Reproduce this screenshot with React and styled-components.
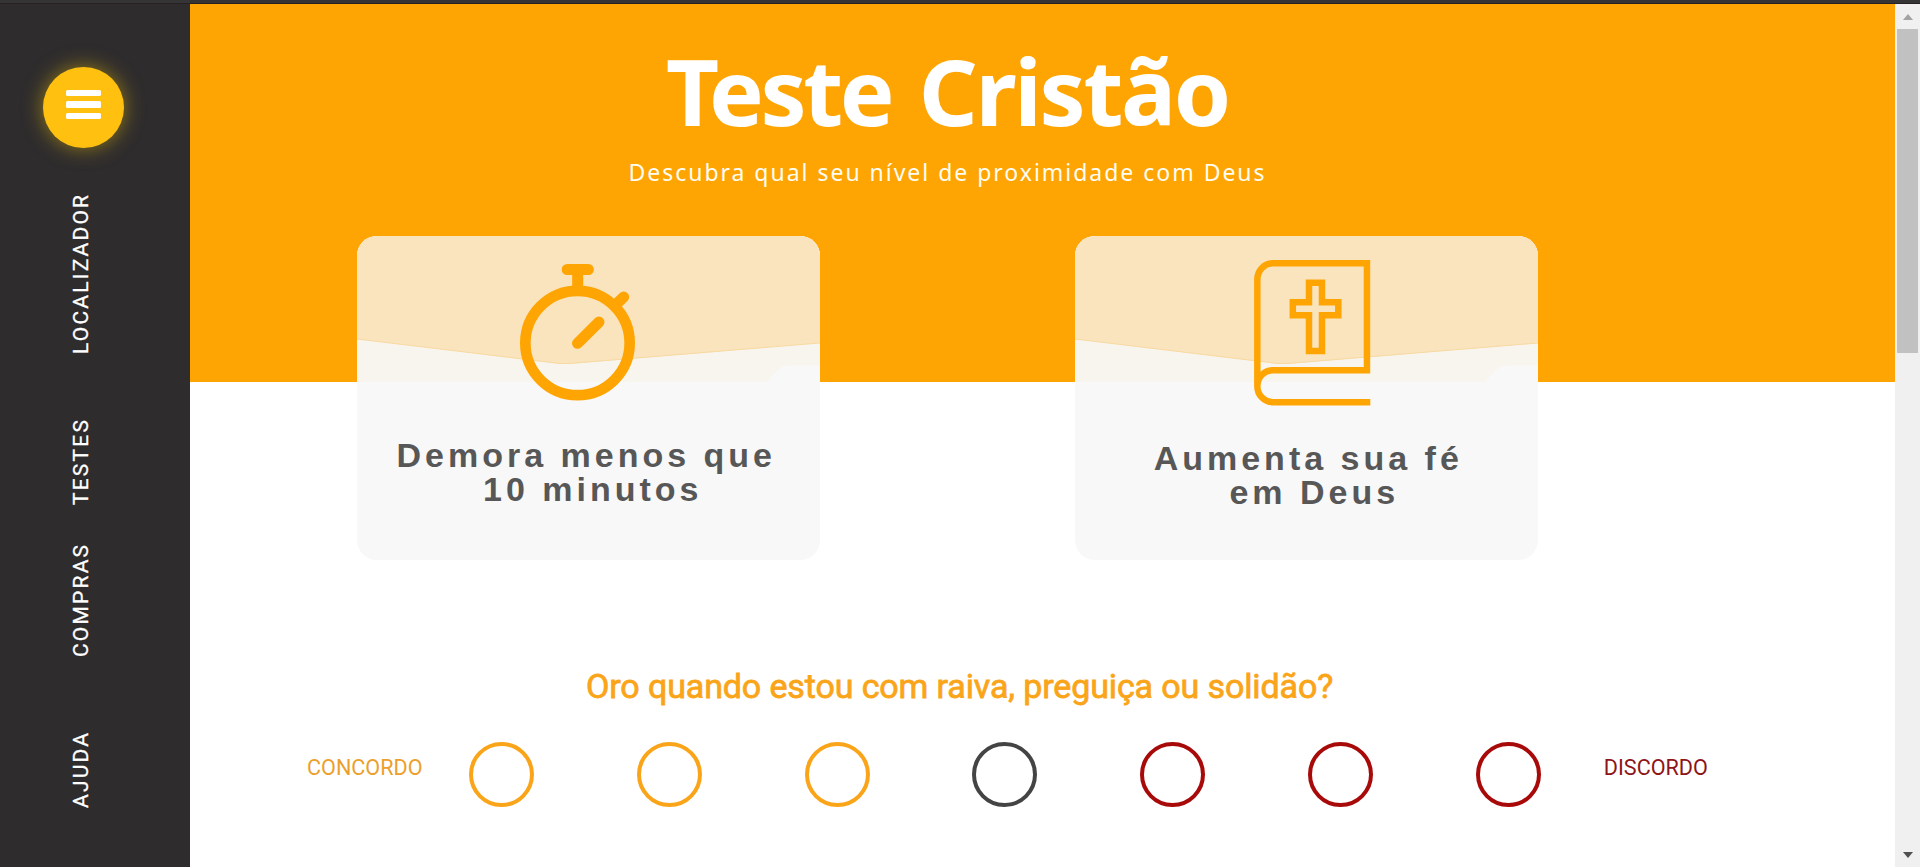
import React from "react";
import styled, { createGlobalStyle } from "styled-components";

const GlobalStyle = createGlobalStyle`
  * { box-sizing: border-box; }
  body { margin: 0; background: #fff; overflow: hidden; }
`;

const Page = styled.div`
  display: flex;
  flex-direction: column;
  width: 1920px;
  height: 867px;
  overflow: hidden;
  background: #fff;
`;

const TopStrip = styled.div`
  flex: none;
  height: 4px;
  background: #363536;
  border-bottom: 1px solid #262223;
`;

const Body = styled.div`
  display: flex;
  flex: 1;
  min-height: 0;
`;

const Sidebar = styled.nav`
  display: flex;
  flex-direction: column;
  flex: none;
  width: 190px;
  padding: 63px 0 0 43px;
  background: #2e2c2d;
`;

const MenuButton = styled.button`
  display: flex;
  flex-direction: column;
  align-items: center;
  gap: 5.2px;
  width: 81px;
  height: 81px;
  padding: 23px 0 0;
  border: 0;
  border-radius: 50%;
  background: #ffc010;
  box-shadow: 0 0 20px rgba(255, 205, 0, 0.5);
`;

const MenuBar = styled.span`
  width: 35px;
  height: 6.3px;
  border-radius: 1.5px;
  background: #fff;
`;

const SideLink = styled.a`
  width: 25px;
  height: ${(p) => p.$length}px;
  margin: ${(p) => p.$gap}px 0 0 26px;
  writing-mode: vertical-rl;
  transform: rotate(180deg);
  font: 400 21px/25px Roboto, sans-serif;
  letter-spacing: 2.2px;
  white-space: nowrap;
  -webkit-text-stroke: 0.3px #fff;
  color: #fff;
`;

const Main = styled.main`
  flex: 1;
  min-width: 0;
`;

const Hero = styled.header`
  height: 378px;
  padding: 37px 190px 0 0;
  background: #ffa503;
  text-align: center;
`;

const Title = styled.h1`
  margin: 0;
  font: bold 92px/100px "Noto Sans", "Open Sans", sans-serif;
  letter-spacing: -2.3px;
  word-spacing: 6px;
  color: #fff;
`;

const TightWord = styled.span`
  letter-spacing: -3.5px;
`;

const Subtitle = styled.p`
  margin: 15px 0 48.400px;
  font: 23px/32px "Noto Sans", "Open Sans", sans-serif;
  letter-spacing: 1.980px;
  color: #fffdf2;
`;

const Cards = styled.div`
  display: flex;
  justify-content: center;
  gap: 255.5px;
`;

const Card = styled.article`
  position: relative;
  width: 463px;
  height: 324px;
  border-radius: 20px;
  background: #f8f8f8;
  overflow: hidden;
`;

const Backdrop = styled.svg`
  position: absolute;
  inset: 0;
`;

const CardContent = styled.div`
  position: relative;
`;

const IconSlot = styled.div`
  height: ${(p) => p.$height}px;
  padding: ${(p) => p.$top}px 0 0 ${(p) => p.$left}px;
  text-align: left;

  svg { display: block; }
`;

const CardLine = styled.div`
  margin-left: ${(p) => p.$indent}px;
  font: bold 34px/34px "Liberation Sans", Arial, sans-serif;
  letter-spacing: 4px;
  white-space: nowrap;
  color: #575757;
`;

const Quiz = styled.section`
  padding: 284px 0 0 117px;
`;

const Question = styled.h2`
  margin: 0 0 36px 279px;
  font: 400 34px/40px Roboto, sans-serif;
  letter-spacing: -0.12px;
  -webkit-text-stroke: 0.8px #faa519;
  color: #faa519;
`;

const Scale = styled.div`
  display: flex;
`;

const ScaleLabel = styled.span`
  width: ${(p) => p.$width}px;
  margin-top: 12.6px;
  font: 21.6px/26px Roboto, sans-serif;
  color: ${(p) => p.$color};
`;

const Options = styled.div`
  display: flex;
  gap: 102.8px;
  margin-right: 63px;
`;

const Option = styled.button`
  width: 65px;
  height: 65px;
  padding: 0;
  border: 4px solid ${(p) => p.$color};
  border-radius: 50%;
  background: transparent;
`;

const Scrollbar = styled.div`
  display: flex;
  flex-direction: column;
  align-items: center;
  flex: none;
  width: 25px;
  background: #f0f0f0;
`;

const ArrowUp = styled.span`
  margin: 10px 0 9px;
  border: 5.5px solid transparent;
  border-top: 0;
  border-bottom: 6px solid #a3a3a3;
`;

const ArrowDown = styled.span`
  margin: auto 0 9px;
  border: 5.5px solid transparent;
  border-bottom: 0;
  border-top: 6px solid #505050;
`;

const Thumb = styled.div`
  width: 21px;
  height: 324px;
  background: #c1c1c1;
`;

function CardBackdrop() {
  return (
    <Backdrop width="463" height="324" viewBox="0 0 463 324">
      <path d="M0 0H463V129.5H430Q425 130 421 134L411 144.500Q410 146 406 146H0Z" fill="#f8f5ee" />
      <path d="M0 0H463V107L212 128H203L0 103Z" fill="#fae4bd" />
      <path d="M0 103L203 127.500H212L463 107" fill="none" stroke="#f8d9a2" strokeWidth="1" />
    </Backdrop>
  );
}

function Stopwatch() {
  return (
    <svg width="115" height="136.700" viewBox="541 132 345 410" fill="none" stroke="#ffa503" strokeWidth="33" strokeLinecap="round">
      <circle cx="713.500" cy="369" r="156.500" strokeWidth="32" />
      <path d="M682.500 148.500H746M714 150V200M828 254L852 231M713.500 370L778 306" />
    </svg>
  );
}

function Bible() {
  return (
    <svg width="116.300" height="145.300" viewBox="583 121 349 436" fill="none" stroke="#ffa503" strokeWidth="19.500">
      <path d="M932 547.500H640A47 48 0 0 1 593 499.500V180A47 49 0 0 1 640 131H922V451.500H640A47 48 0 0 0 593 499.500" />
      <path d="M748 189.500H787V247.500H836V287H787V394H748V287H699.500V247.500H748Z" />
    </svg>
  );
}

const links = [
  { label: "LOCALIZADOR", length: 162, gap: 44 },
  { label: "TESTES", length: 90, gap: 61 },
  { label: "COMPRAS", length: 116, gap: 36 },
  { label: "AJUDA", length: 80, gap: 71 },
];

const optionColors = ["#faa519", "#faa519", "#faa519", "#444444", "#a80a0a", "#a80a0a", "#a80a0a"];

export default function App() {
  return (
    <>
      <GlobalStyle />
      <Page>
        <TopStrip />
        <Body>
          <Sidebar>
            <MenuButton aria-label="Menu">
              <MenuBar />
              <MenuBar />
              <MenuBar />
            </MenuButton>
            {links.map((l) => (
              <SideLink key={l.label} $length={l.length} $gap={l.gap}>{l.label}</SideLink>
            ))}
          </Sidebar>
          <Main>
            <Hero>
              <Title><TightWord>Teste</TightWord> Cristão</Title>
              <Subtitle>Descubra qual seu nível de proximidade com Deus</Subtitle>
              <Cards>
                <Card>
                  <CardBackdrop />
                  <CardContent>
                    <IconSlot $top={27.8} $left={163.5} $height={201.4}><Stopwatch /></IconSlot>
                    <CardLine $indent={-4}>Demora menos que</CardLine>
                    <CardLine $indent={9}>10 minutos</CardLine>
                  </CardContent>
                </Card>
                <Card>
                  <CardBackdrop />
                  <CardContent>
                    <IconSlot $top={24} $left={179} $height={205.1}><Bible /></IconSlot>
                    <CardLine $indent={3}>Aumenta sua fé</CardLine>
                    <CardLine $indent={15}>em Deus</CardLine>
                  </CardContent>
                </Card>
              </Cards>
            </Hero>
            <Quiz>
              <Question>Oro quando estou com raiva, preguiça ou solidão?</Question>
              <Scale>
                <ScaleLabel $width={162} $color="#ec9f2c">CONCORDO</ScaleLabel>
                <Options>
                  {optionColors.map((color, i) => (
                    <Option key={i} $color={color} aria-label={`Opção ${i + 1}`} />
                  ))}
                </Options>
                <ScaleLabel $width={110} $color="#8e1418">DISCORDO</ScaleLabel>
              </Scale>
            </Quiz>
          </Main>
          <Scrollbar>
            <ArrowUp />
            <Thumb />
            <ArrowDown />
          </Scrollbar>
        </Body>
      </Page>
    </>
  );
}
